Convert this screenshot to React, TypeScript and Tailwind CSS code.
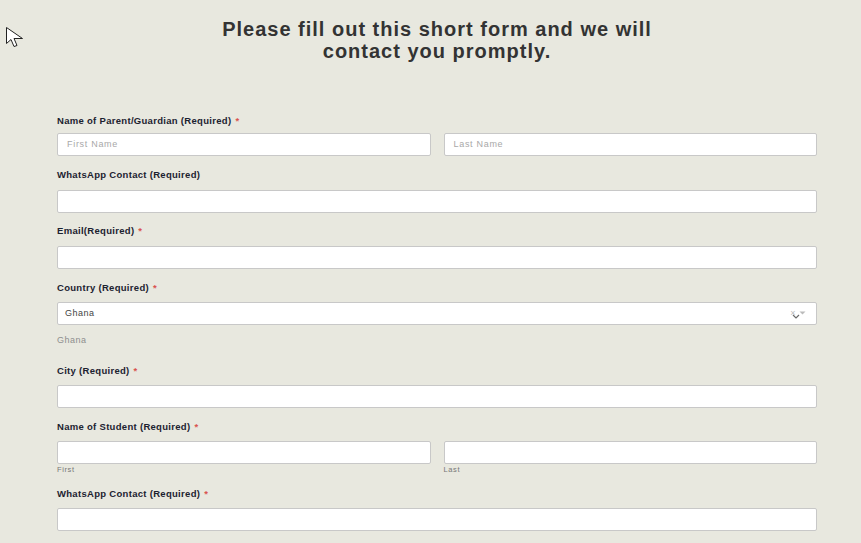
import React from 'react';

function Label({ text, required = true }: { text: string; required?: boolean }) {
  return (
    <div className="text-[9.5px] font-bold leading-[12px] tracking-[0.3px] text-[#1c2230]">
      {text}
      {required && <span className="ml-1 text-[#d9534f]">*</span>}
    </div>
  );
}

function Input({ placeholder = '' }: { placeholder?: string }) {
  return (
    <div className="h-[23px] w-full rounded-[2px] border border-[#c8c8c8] bg-white px-[9px] text-[9px] leading-[21px] tracking-[0.7px] text-[#a8a8a8]">
      {placeholder}
    </div>
  );
}

export default function App() {
  return (
    <div className="relative min-h-[543px] w-full overflow-hidden bg-[#e8e8df] font-['Liberation_Sans',Arial,sans-serif]">
      {/* mouse cursor */}
      <svg className="absolute left-[5px] top-[26px]" width="22" height="23" viewBox="0 0 22 23">
        <path d="M1.5 1.5 L1.5 17.5 L6 13.5 L9 20.5 L12 19.5 L9 12.5 L17.5 12.5 Z" fill="white" stroke="#222" strokeWidth="1" strokeLinejoin="round" />
      </svg>

      <h1 className="pl-[13px] pt-[18px] text-center text-[20px] font-bold leading-[22px] tracking-[1px] text-[#333333]">
        Please fill out this short form and we will
        <br />
        contact you promptly.
      </h1>

      <div className="ml-[57px] mt-[53px] w-[760px]">
        <Label text="Name of Parent/Guardian (Required)" />
        <div className="mt-[6px] grid grid-cols-2 gap-[13px]">
          <Input placeholder="First Name" />
          <Input placeholder="Last Name" />
        </div>

        <div className="mt-[13px]">
          <Label text="WhatsApp Contact (Required)" required={false} />
        </div>
        <div className="mt-[9px]">
          <Input />
        </div>

        <div className="mt-[12px]">
          <Label text="Email(Required)" />
        </div>
        <div className="mt-[9px]">
          <Input />
        </div>

        <div className="mt-[13px]">
          <Label text="Country (Required)" />
        </div>
        <div className="relative mt-[8px] flex h-[23px] w-full items-center rounded-[2px] border border-[#c8c8c8] bg-white pl-[7px] text-[9px] tracking-[0.5px] text-[#444]">
          Ghana
          <div className="absolute right-[10px] top-[5px] flex items-start gap-[3px] text-[#bbb]">
            <span className="text-[9px] leading-[10px]">×</span>
            <svg width="7" height="5" viewBox="0 0 7 5" className="mt-[3px]">
              <path d="M0.5 0.5 L3.5 3.5 L6.5 0.5 Z" fill="#bbb" />
            </svg>
          </div>
          <svg className="absolute right-[16px] top-[11px]" width="8" height="5" viewBox="0 0 8 5">
            <path d="M1 1 L4 4 L7 1" fill="none" stroke="#6a6a6a" strokeWidth="1.2" />
          </svg>
        </div>
        <div className="mt-[9px] text-[9px] leading-[12px] tracking-[0.5px] text-[#8e8e8e]">Ghana</div>

        <div className="mt-[19px]">
          <Label text="City (Required)" />
        </div>
        <div className="mt-[8px]">
          <Input />
        </div>

        <div className="mt-[13px]">
          <Label text="Name of Student (Required)" />
        </div>
        <div className="mt-[8px] grid grid-cols-2 gap-[13px]">
          <div>
            <Input />
            <div className="mt-[1px] text-[7.5px] leading-[10px] tracking-[0.6px] text-[#777]">First</div>
          </div>
          <div>
            <Input />
            <div className="mt-[1px] text-[7.5px] leading-[10px] tracking-[0.6px] text-[#777]">Last</div>
          </div>
        </div>

        <div className="mt-[13px]">
          <Label text="WhatsApp Contact (Required)" />
        </div>
        <div className="mt-[8px]">
          <Input />
        </div>
      </div>
    </div>
  );
}
